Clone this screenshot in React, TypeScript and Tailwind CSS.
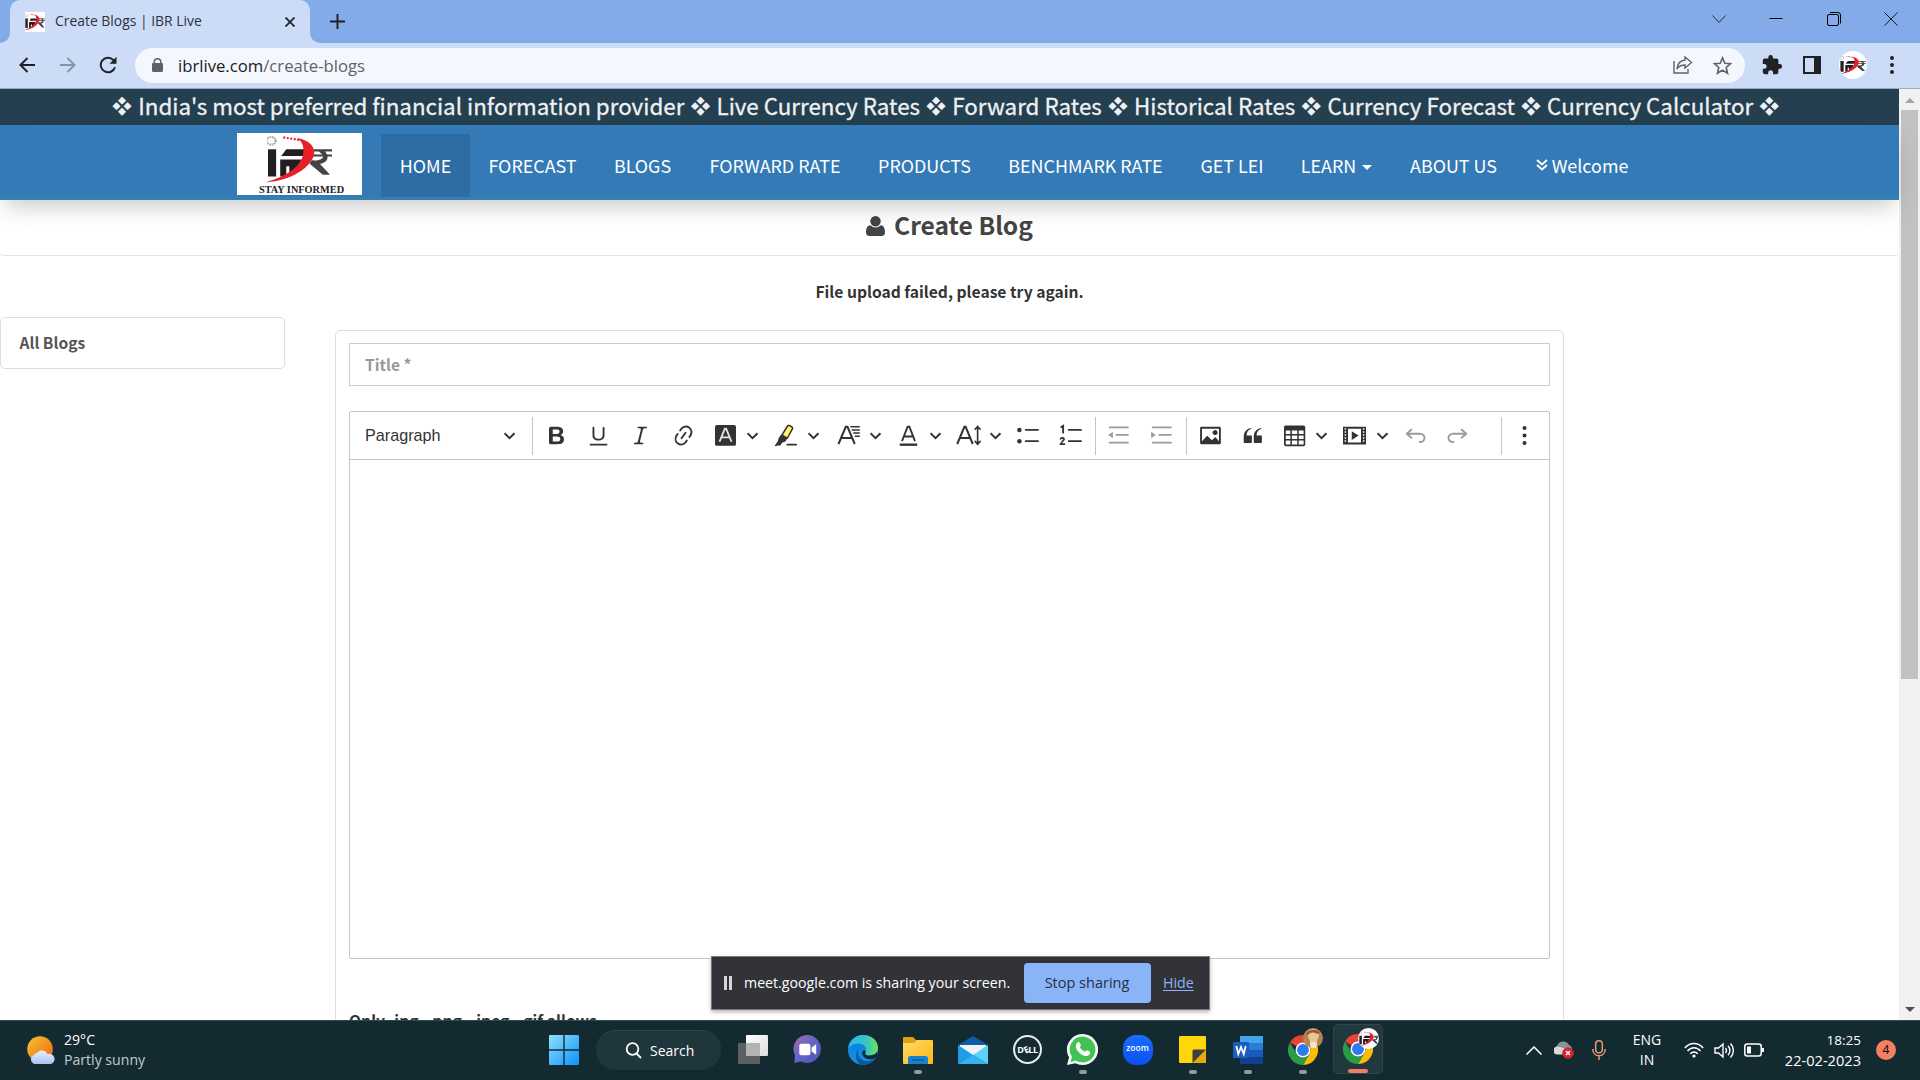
import React, { ReactNode } from "react";

const pageFont = "font-['Noto_Sans_CJK_SC','Noto_Sans',sans-serif]";
const uiFont = "font-['Open_Sans','Noto_Sans',sans-serif]";

function IbrMark({ className }: { className: string }) {
  return (
    <svg viewBox="0 0 64 60" preserveAspectRatio="none" className={className}>
      <g fill="#231f20">
        <path d="M1 18h8v32H1z" />
        <path d="M19 18h21l-1 8H14z" />
        <path d="M13 30h21c-3 8-7 13-12 17v-9h-3v12h-6z" />
      </g>
      <g fill="#444">
        <path d="M42 18h22v2.500H42zM42 24h22v2.500H42z" />
        <path d="M50 19h6c7 8 3 15-4 16l10 13h-7L42 35l2-4c8 1 12-2 11-6z" />
      </g>
      <path d="M30 5c15 3 20 15 14 26C38 43 20 56 -2 57c18-6 33-16 37-30 2-9 1-17-5-22z" fill="#e71f28" />
      <path d="M16 4l16 3" stroke="#e71f28" strokeWidth="2.500" strokeDasharray="2 1.500" />
      <circle cx="4" cy="8" r="4.500" fill="none" stroke="#aaa" strokeWidth="2.500" strokeDasharray="1.600 .8" />
    </svg>
  );
}

function TabStrip() {
  return (
    <div className="flex h-[43px] bg-[#84abe9]">
      <div className="relative ml-[10px] flex h-[43px] w-[300px] items-center rounded-t-[10px] bg-[#ccdcf7]">
        <svg viewBox="0 0 10 10" className="absolute -left-[10px] bottom-0 size-[10px] fill-[#ccdcf7]"><path d="M10 0v10H0A10 10 0 0 0 10 0z" /></svg>
        <svg viewBox="0 0 10 10" className="absolute -right-[10px] bottom-0 size-[10px] fill-[#ccdcf7]"><path d="M0 0v10h10A10 10 0 0 1 0 0z" /></svg>
        <div className="ml-[15px] flex size-5 items-center justify-center bg-white">
          <IbrMark className="h-[18px] w-5" />
        </div>
        <span className={`ml-[10px] w-[180px] text-[13.900px] whitespace-nowrap text-[#2b323d] ${uiFont}`}>Create Blogs | IBR Live</span>
        <svg viewBox="0 0 10 10" className="ml-[50px] size-[10px] stroke-[#1f2226] stroke-[1.8]"><path d="M.5.5l9 9M9.500.5l-9 9" /></svg>
      </div>
      <svg viewBox="0 0 15 15" className="mt-[14px] ml-5 size-[15px] stroke-[#1f2226] stroke-2"><path d="M7.500 0v15M0 7.500h15" /></svg>
      <div className="mt-3 ml-auto flex h-[13px] items-center pr-[22px]">
        <svg viewBox="0 0 14 14" fill="none" className="size-[14px] stroke-[#26334a] stroke-1"><path d="M.5 3.500l6.500 7 6.500-7" /></svg>
        <svg viewBox="0 0 14 14" fill="none" className="ml-[43px] size-[14px] stroke-black stroke-1"><path d="M.5 6.500h13" /></svg>
        <svg viewBox="0 0 14 14" fill="none" className="ml-[44px] size-[14px] stroke-black stroke-1"><rect x=".5" y="2.500" width="11" height="11" rx="1.500" /><path d="M3 .5h8a2.500 2.500 0 0 1 2.500 2.500v8.500" /></svg>
        <svg viewBox="0 0 14 14" fill="none" className="ml-[43px] size-[14px] stroke-[#111827] stroke-1"><path d="M.5.5l13 13M13.500.5l-13 13" /></svg>
      </div>
    </div>
  );
}

function AddressBar() {
  return (
    <div className="flex h-[46px] items-center border-b border-[#9aaac4] bg-[#ccdcf7] pb-px">
      <svg viewBox="0 0 16 16" fill="none" className="ml-[19px] size-4 stroke-[#202124] stroke-2"><path d="M16 8H1.500M8.500 1L1.500 8l7 7" /></svg>
      <svg viewBox="0 0 16 16" fill="none" className="ml-[25px] size-4 stroke-[#8592a8] stroke-2"><path d="M0 8h14.500M7.500 1l7 7-7 7" /></svg>
      <svg viewBox="0 0 18 18" fill="none" className="ml-[23px] size-[18px] stroke-[#202124] stroke-2"><path d="M16 11.200A7.300 7.300 0 1 1 14.300 3.900L16.500 6.200" /><path d="M17.500.8v7h-7z" fill="#202124" stroke="none" /></svg>
      <div className="ml-[18px] flex h-[35px] w-[1610px] items-center rounded-full bg-[#f4f7fd]">
        <svg viewBox="0 0 11 14" className="ml-[17px] h-[14px] w-[11px] fill-[#5f6368]"><path fillRule="evenodd" d="M1.500 5V4a4 4 0 0 1 8 0v1h.3c.7 0 1.200.5 1.200 1.200v6.600c0 .7-.5 1.200-1.200 1.200H1.200C.5 14 0 13.500 0 12.800V6.200C0 5.500.5 5 1.200 5zM3 5h5V4a2.500 2.500 0 0 0-5 0z" /></svg>
        <span className={`mt-px ml-[15px] text-[16.700px] whitespace-nowrap text-[#5f6368] ${uiFont}`}>
          <span className="text-[#202124]">ibrlive.com</span>/create-blogs
        </span>
        <svg viewBox="0 0 20 18" fill="none" className="ml-auto h-[18px] w-5 stroke-[#5f6368] stroke-[1.400]"><path d="M1 5v12h14v-4" /><path d="M12 1l6.500 5.500L12 12V9c-4 0-6 1-8 4 .5-5 3-8.500 8-9z" /></svg>
        <svg viewBox="0 0 20 20" fill="none" className="mr-[13px] ml-5 size-[19px] stroke-[#5f6368] stroke-[1.700]"><path d="M10 2l2.400 5.600 6.100.5-4.600 4 1.400 6L10 14.900 4.700 18.100l1.400-6-4.600-4 6.100-.5z" /></svg>
      </div>
      <svg viewBox="0 0 24 24" className="ml-[16px] size-[22px] fill-[#202124]"><path d="M20.500 11H19V7a2 2 0 0 0-2-2h-4V3.500a2.500 2.500 0 0 0-5 0V5H4a2 2 0 0 0-2 2v3.800h1.500a2.700 2.700 0 0 1 0 5.400H2V20a2 2 0 0 0 2 2h3.800v-1.500a2.700 2.700 0 0 1 5.400 0V22H17a2 2 0 0 0 2-2v-4h1.500a2.500 2.500 0 0 0 0-5z" /></svg>
      <div className="ml-[20px] h-[18px] w-[18px] border-2 border-r-[7px] border-[#202124]" />
      <div className="ml-[18px] flex size-7 items-center justify-center overflow-hidden rounded-full bg-white">
        <IbrMark className="h-[20px] w-[26px]" />
      </div>
      <div className="ml-[23px] flex flex-col gap-[3px]">
        <i className="size-1 rounded-full bg-[#202124]" />
        <i className="size-1 rounded-full bg-[#202124]" />
        <i className="size-1 rounded-full bg-[#202124]" />
      </div>
    </div>
  );
}

const tickerItems = ["India's most preferred financial information provider", "Live Currency Rates", "Forward Rates", "Historical Rates", "Currency Forecast", "Currency Calculator"];

function Ticker() {
  const diamond = <span className="w-[32.200px] text-center text-[18.500px] [-webkit-text-stroke:0.900px_#eef1f3]">❖</span>;
  return (
    <div className="flex h-9 items-center bg-[#243f50] pb-[3px] pl-[106px] text-[22.370px] leading-[33px] whitespace-nowrap text-[#eef1f3] [-webkit-text-stroke:0.300px_#eef1f3]">
      {tickerItems.map((t) => (
        <React.Fragment key={t}>
          {diamond}
          <span>{t}</span>
        </React.Fragment>
      ))}
      {diamond}
    </div>
  );
}

function SiteNav() {
  const item = "flex h-[63px] items-center justify-center pb-px";
  return (
    <nav className="relative z-10 flex h-[75px] items-start border-b-[3px] border-[#3580ae] bg-[#337ab7] pt-2 pl-[237px] text-[17.900px] whitespace-nowrap text-white shadow-[0_12px_22px_-5px_rgba(0,0,0,0.20)]">
      <div className="flex h-[62px] w-[125px] flex-col items-center bg-white">
        <IbrMark className="mt-px h-[51px] w-[65px]" />
        <span className="ml-1 font-['Liberation_Serif',serif] text-[10.300px] leading-[10px] font-bold text-[#222]">STAY INFORMED</span>
      </div>
      <div className="mt-px ml-[19px] flex">
        <a className={`${item} w-[89px] bg-[#2e6da4]`}>HOME</a>
        <a className={`${item} w-[125px]`}>FORECAST</a>
        <a className={`${item} w-[95px]`}>BLOGS</a>
        <a className={`${item} w-[170px]`}>FORWARD RATE</a>
        <a className={`${item} w-[129px]`}>PRODUCTS</a>
        <a className={`${item} w-[193px]`}>BENCHMARK RATE</a>
        <a className={`${item} w-[100px]`}>GET LEI</a>
        <a className={`${item} w-[109px]`}>LEARN<i className="mt-1 ml-[6px] border-x-5 border-t-5 border-x-transparent border-t-white" /></a>
        <a className={`${item} w-[125px]`}>ABOUT US</a>
        <a className={`${item} w-[132px]`}>
          <svg viewBox="0 0 12 12" fill="none" className="mr-1 size-3 stroke-white stroke-[1.900]"><path d="M1 1l5 4.500L11 1M1 6l5 4.500L11 6" /></svg>
          Welcome
        </a>
      </div>
    </nav>
  );
}

function Ico({ ml, children, dim }: { ml: string; children: ReactNode; dim?: boolean }) {
  return (
    <svg viewBox="0 0 20 20" className={`${ml} size-[25px] shrink-0 ${dim ? "fill-[#9a9a9a] text-[#9a9a9a]" : "fill-[#333] text-[#333]"}`}>
      {children}
    </svg>
  );
}

function Caret({ ml }: { ml: string }) {
  return (
    <svg viewBox="0 0 12 8" fill="none" className={`${ml} mt-[1px] h-2 w-3 shrink-0 stroke-[#333] stroke-2`}>
      <path d="M.5 1.200l5 5 5-5" />
    </svg>
  );
}

function Sep({ ml }: { ml: string }) {
  return <i className={`${ml} h-[38px] w-px shrink-0 bg-[#c4c4c4]`} />;
}

function Toolbar() {
  const line = { fill: "none", stroke: "currentColor", strokeLinecap: "round" as const };
  return (
    <div className="flex h-[48px] items-center border-b border-[#c4c4c4]">
      <span className="ml-[15px] w-[139px] font-['Liberation_Sans',sans-serif] text-[16.200px] text-[#333]">Paragraph</span>
      <Caret ml="ml-0" />
      <Sep ml="ml-[16px]" />
      <Ico ml="ml-[11px]"><path d="M10.187 17H5.773c-.637 0-1.092-.138-1.364-.415-.273-.277-.409-.718-.409-1.323V4.738c0-.617.14-1.062.419-1.332.279-.27.73-.406 1.354-.406h4.680c.69 0 1.288.041 1.793.124.506.083.96.242 1.360.478.341.197.644.447.906.75a3.262 3.262 0 0 1 .808 2.162c0 1.401-.722 2.426-2.167 3.075C15.050 10.175 16 11.315 16 13.010a3.756 3.756 0 0 1-2.296 3.504 6.100 6.100 0 0 1-1.517.377c-.571.073-1.238.11-2 .11zm-.217-6.217H7v4.087h3.069c1.977 0 2.965-.69 2.965-2.072 0-.707-.256-1.220-.768-1.537-.512-.319-1.277-.478-2.296-.478zM7 5.130v3.619h2.606c.729 0 1.292-.067 1.690-.2a1.600 1.600 0 0 0 .91-.765c.165-.267.247-.566.247-.897 0-.707-.26-1.176-.778-1.409-.519-.232-1.310-.348-2.375-.348H7z" /></Ico>
      <Ico ml="ml-[17px]"><path d="M3 18v-1.500h14V18zm2.200-8V3.600c0-.4.4-.6.8-.6.3 0 .7.2.7.6v6.200c0 2 1.300 2.800 3.200 2.800 1.900 0 3.400-.9 3.400-2.900V3.600c0-.3.4-.5.8-.5.3 0 .7.2.7.5V10c0 2.700-2.200 4-4.900 4-2.600 0-4.700-1.200-4.700-4z" /></Ico>
      <Ico ml="ml-[17px]"><path d="m9.586 14.633.021.004c-.036.335.095.655.393.962.082.083.173.15.274.201h1.474a.6.6 0 1 1 0 1.200H5.304a.6.6 0 0 1 0-1.200h1.150c.474-.07.809-.182 1.005-.334.157-.122.291-.32.404-.597l2.416-9.550a1.053 1.053 0 0 0-.281-.823 1.120 1.120 0 0 0-.442-.296H8.150a.6.6 0 0 1 0-1.200h6.443a.6.6 0 1 1 0 1.200h-1.195c-.376.056-.65.155-.823.296-.215.175-.423.439-.623.79l-2.366 9.347z" /></Ico>
      <Ico ml="ml-[18px]"><path d="m11.077 15 .991-1.416a.75.75 0 1 1 1.229.86l-1.148 1.640a.748.748 0 0 1-.217.206 5.251 5.251 0 0 1-8.503-5.955.741.741 0 0 1 .12-.274l1.147-1.639a.75.75 0 1 1 1.228.86L4.933 10.700l.006.003a3.750 3.750 0 0 0 6.132 4.294l.006.004zm5.494-5.335a.748.748 0 0 1-.12.274l-1.147 1.639a.75.75 0 1 1-1.228-.86l.86-1.230a3.750 3.750 0 0 0-6.144-4.301l-.86 1.229a.75.75 0 0 1-1.229-.86l1.148-1.640a.748.748 0 0 1 .217-.206 5.251 5.251 0 0 1 8.503 5.955zm-4.563-2.532a.75.75 0 0 1 .184 1.045l-3.155 4.505a.75.75 0 1 1-1.229-.86l3.155-4.506a.75.75 0 0 1 1.045-.184z" /></Ico>
      <Ico ml="ml-[17px]">
        <rect x="1.600" y="1.600" width="16.800" height="16.600" rx="1.500" />
        <path d="M5.200 15L9.500 4.500h1L14.800 15M6.700 11.500h6.600" fill="none" stroke="#e4e4e4" strokeWidth="1.500" />
      </Ico>
      <Caret ml="ml-[9px]" />
      <Ico ml="ml-[14px]">
        <path d="M11.300 2.800c.5-.9 1.200-1.100 2-.7l1.600.9c.8.500 1 1.200.5 2l-4 7.200-4.300-2.400z" fill="#fdf46d" stroke="#333" strokeWidth="1.200" />
        <path d="M6.600 9.200l5 2.900-1.900 2.800-2.200.6L5.800 18l-2.200-.1-1.300.6-1-.4 2.500-3.300.9-3.200z" />
        <path d="M11.500 17.300h7" {...line} strokeWidth="1.500" />
      </Ico>
      <Caret ml="ml-[10px]" />
      <Ico ml="ml-[16px]">
        <path d="M2 16.800L7.800 3h1.400L15 16.800M4 12h9" {...line} strokeLinecap="butt" strokeWidth="1.600" />
        <path d="M11.500 3h7.500M12.500 5.500H19M13.800 8H19M15 10.500h4" {...line} strokeLinecap="butt" strokeWidth="1.200" />
      </Ico>
      <Caret ml="ml-[9px]" />
      <Ico ml="ml-[14px]">
        <path d="M4.800 14.500L9.300 3h1.400l4.500 11.500M6.300 10.800h7.400" {...line} strokeLinecap="butt" strokeWidth="1.500" />
        <path d="M3 16.400h14v1.900H3z" />
      </Ico>
      <Caret ml="ml-[9px]" />
      <Ico ml="ml-[14px]">
        <path d="M1 16.800L6.700 3h1l5.700 13.800M3 12h8.400" {...line} strokeLinecap="butt" strokeWidth="1.600" />
        <path d="M17.300 4v12M15.300 5l2-2.300 2 2.300M15.300 14.700l2 2.300 2-2.300" {...line} strokeWidth="1.300" />
      </Ico>
      <Caret ml="ml-[9px]" />
      <Ico ml="ml-[14px]">
        <circle cx="2.700" cy="5.500" r="1.800" /><circle cx="2.700" cy="14.500" r="1.800" />
        <path d="M7.800 5.500h9.800M7.800 14.500h9.800" {...line} strokeWidth="1.500" />
      </Ico>
      <Ico ml="ml-[18px]">
        <path d="M1.800 3.200l1.500-.9v5.400" {...line} strokeWidth="1.500" />
        <path d="M1.200 12.700c.8-1.300 3-1 2.800.3-.2 1.200-2 2-2.600 3.800h3" {...line} strokeWidth="1.400" />
        <path d="M7.800 5.500h9.800M7.800 14.500h9.800" {...line} strokeWidth="1.500" />
      </Ico>
      <Sep ml="ml-[11px]" />
      <Ico ml="ml-[10px]" dim>
        <path d="M3 3.500h14.500M8.300 9.500h9.200M3 15.700h14.500" {...line} strokeWidth="1.500" />
        <path d="M5.500 7v5L1.700 9.500z" />
      </Ico>
      <Ico ml="ml-[18px]" dim>
        <path d="M3 3.500h14.500M8.300 9.500h9.200M3 15.700h14.500" {...line} strokeWidth="1.500" />
        <path d="M1.700 7v5l3.800-2.500z" />
      </Ico>
      <Sep ml="ml-[12px]" />
      <Ico ml="ml-[11px]"><path d="M6.910 10.540c.26-.23.64-.21.88.03l3.360 3.140 2.230-2.060a.64.64 0 0 1 .87 0l2.520 2.970V4.500H3.200v10.120l3.710-4.080zm10.270-7.510c.6 0 1.090.47 1.090 1.050v11.840c0 .59-.49 1.060-1.090 1.060H2.790c-.6 0-1.090-.47-1.090-1.060V4.080c0-.58.49-1.050 1.100-1.050h14.380zm-5.220 5.560a1.960 1.960 0 1 1 3.400-1.960 1.960 1.960 0 0 1-3.400 1.960z" /></Ico>
      <Ico ml="ml-[17px]"><path d="M3 10.423a6.500 6.500 0 0 1 6.056-6.408l.038.67C6.448 5.423 5.354 7.663 5.220 10H9c.552 0 .5.432.5.986v4.511c0 .554-.448.503-1 .503h-5c-.552 0-.5-.449-.5-1.003v-4.574zm8 0a6.500 6.500 0 0 1 6.056-6.408l.038.67c-2.646.739-3.740 2.979-3.873 5.315H17c.552 0 .5.432.5.986v4.511c0 .554-.448.503-1 .503h-5c-.552 0-.5-.449-.5-1.003v-4.574z" /></Ico>
      <Ico ml="ml-[17px]">
        <path fillRule="evenodd" d="M3 2h14.200c.9 0 1.400.6 1.400 1.500V17c0 .9-.5 1.500-1.400 1.500H3c-.9 0-1.400-.6-1.400-1.500V3.500C1.600 2.600 2.100 2 3 2zm0 4v2.800h3.700V6zm4.900 0v2.800h4.300V6zm5.500 0v2.800h3.900V6zM3 10v2.800h3.700V10zm4.900 0v2.800h4.300V10zm5.500 0v2.800h3.900V10zM3 14v3.100h3.700V14zm4.900 0v3.100h4.300V14zm5.500 0v3.100h3.900V14z" />
      </Ico>
      <Caret ml="ml-[9px]" />
      <Ico ml="ml-[14px]">
        <path fillRule="evenodd" d="M.8 2.900h18.400v14.200H.8zM4.800 4.500v11h10.400v-11z" />
        <path d="M7.800 6.500v7l5.500-3.500z" />
        <path d="M2.700 4.200v12M17.300 4.200v12" stroke="#fff" strokeWidth="1.200" strokeDasharray="1.200 1.200" />
      </Ico>
      <Caret ml="ml-[10px]" />
      <Ico ml="ml-[14px]" dim><path d="m5.042 9.367 2.189 1.837a.75.75 0 0 1-.965 1.149l-3.788-3.180a.747.747 0 0 1-.21-.284.75.75 0 0 1 .17-.945L6.230 4.762a.75.75 0 1 1 .964 1.150L4.863 7.866h8.917A.75.75 0 0 1 14 7.900a4 4 0 1 1-1.477 7.718l.344-1.489a2.500 2.500 0 1 0 1.094-4.730l.008-.032H5.042z" /></Ico>
      <Ico ml="ml-[17px]" dim><path transform="matrix(-1 0 0 1 20 0)" d="m5.042 9.367 2.189 1.837a.75.75 0 0 1-.965 1.149l-3.788-3.180a.747.747 0 0 1-.21-.284.75.75 0 0 1 .17-.945L6.230 4.762a.75.75 0 1 1 .964 1.150L4.863 7.866h8.917A.75.75 0 0 1 14 7.900a4 4 0 1 1-1.477 7.718l.344-1.489a2.500 2.500 0 1 0 1.094-4.730l.008-.032H5.042z" /></Ico>
      <Sep ml="ml-[31px]" />
      <Ico ml="ml-[10px]"><circle cx="10" cy="4" r="1.600" /><circle cx="10" cy="10" r="1.600" /><circle cx="10" cy="16" r="1.600" /></Ico>
    </div>
  );
}

function SharingBar() {
  return (
    <div className={`absolute top-[956px] left-[711px] z-20 flex h-[54px] w-[499px] items-center border border-[#77787b] bg-[#323338] text-[14.200px] whitespace-nowrap shadow-[0_2px_4px_rgba(0,0,0,0.3)] ${uiFont}`}>
      <i className="ml-3 h-[14px] w-[8px] border-x-3 border-[#d5d6d8]" />
      <span className="ml-[12px] w-[280px] text-white">meet.google.com is sharing your screen.</span>
      <button className="flex h-10 w-[127px] items-center justify-center rounded-[4px] bg-[#8ab4f8] pr-px text-[14.500px] text-[#26303f]">Stop sharing</button>
      <a className="ml-3 text-[#8ab4f8] underline underline-offset-2">Hide</a>
    </div>
  );
}

function ChromeIcon() {
  return (
    <svg viewBox="0 0 48 48" className="size-[30px]">
      <path d="M24 24L3.200 12A24 24 0 0 1 44.800 12z" fill="#ea4335" />
      <path d="M44.800 12A24 24 0 0 1 24 48l10.400-18A12 12 0 0 0 24 12z" fill="#fbbc04" />
      <path d="M3.200 12A24 24 0 0 0 24 48l10.400-18A12 12 0 0 1 13.600 30z" fill="#2a9c48" />
      <circle cx="24" cy="24" r="12" fill="#fff" /><circle cx="24" cy="24" r="9.500" fill="#2f7bee" />
    </svg>
  );
}

function TaskItem({ children, dot }: { children: ReactNode; dot?: boolean }) {
  return (
    <div className="relative flex h-[60px] w-[55px] shrink-0 items-center justify-center pb-px">
      {children}
      {dot && <i className="absolute bottom-[6px] left-[24px] h-1 w-2 rounded-full bg-[#8f9b9e]" />}
    </div>
  );
}

function Taskbar() {
  return (
    <div className={`flex h-[60px] items-center border-t border-[#33494f] bg-[#132a31] pb-px text-[14px] whitespace-nowrap text-white ${uiFont}`}>
      <svg viewBox="0 0 28 28" className="ml-[27px] h-[28px] w-[28px]">
        <defs><linearGradient id="sun" x2="1" y2="1"><stop stopColor="#f4c430" /><stop offset="1" stopColor="#f0650e" /></linearGradient><linearGradient id="cl" x2="0" y2="1"><stop stopColor="#e9f0fd" /><stop offset="1" stopColor="#a9c2f0" /></linearGradient></defs>
        <circle cx="13" cy="13" r="12.800" fill="url(#sun)" />
        <path d="M7 28a5 5 0 0 1-.5-9 7 7 0 0 1 4-2.500 6 6 0 0 1 10 1.500A5 5 0 0 1 24 28z" fill="url(#cl)" />
      </svg>
      <div className="ml-[9px] w-[120px] pb-px text-[14.100px] leading-5">
        <div>29°C</div>
        <div className="text-[#c3cbce]">Partly sunny</div>
      </div>
      <svg viewBox="0 0 30 30" className="ml-[365px] size-[30px]">
        <defs><linearGradient id="win" x2="1" y2="1"><stop stopColor="#8fe0fd" /><stop offset="1" stopColor="#0a92fb" /></linearGradient></defs>
        <path d="M1 0h13.300v14.300H0V1a1 1 0 0 1 1-1zM15.700 0H29a1 1 0 0 1 1 1v13.300H15.700zM0 15.700h14.300V30H1a1 1 0 0 1-1-1zM15.700 15.700H30V29a1 1 0 0 1-1 1H15.700z" fill="url(#win)" />
      </svg>
      <div className="ml-[17px] flex h-10 w-[125px] items-center rounded-full border-t border-[#2f454c] bg-[#20363d] pl-[29px]">
        <svg viewBox="0 0 17 17" fill="none" className="size-[17px] stroke-white stroke-[1.800]"><circle cx="7.500" cy="7" r="5.800" /><path d="M11.500 11.500l4.500 4.500" /></svg>
        <span className="ml-[8px]">Search</span>
      </div>
      <div className="ml-[4px] flex">
        <TaskItem>
          <svg viewBox="0 0 30 29" className="h-[29px] w-[30px]"><defs><linearGradient id="tv" x2="1" y2="1"><stop stopColor="#fff" /><stop offset="1" stopColor="#ddd" /></linearGradient></defs><rect x="8" width="22" height="21" rx="1" fill="url(#tv)" /><rect y="8" width="22" height="21" rx="1" fill="#666" opacity=".9" /><path d="M8 8h14v13H8z" fill="#b3b3b3" /></svg>
        </TaskItem>
        <TaskItem>
          <svg viewBox="0 0 30 30" className="size-[29px]"><defs><linearGradient id="mt" x2="1" y2="1"><stop stopColor="#a86bb0" /><stop offset=".5" stopColor="#6264c7" /><stop offset="1" stopColor="#4b53bc" /></linearGradient></defs><path d="M15.500 0A14.500 14.500 0 1 1 8 27.500L1.500 29 2 21A14.500 14.500 0 0 1 15.500 0z" fill="url(#mt)" /><rect x="6.500" y="9" width="11.500" height="12" rx="2" fill="#fff" /><path d="M19.300 13l4.700-3.500v11L19.300 17z" fill="#fff" /></svg>
        </TaskItem>
        <TaskItem>
          <svg viewBox="0 0 30 30" className="size-[30px]">
            <defs><linearGradient id="e1"><stop stopColor="#2cb4ee" /><stop offset=".6" stopColor="#35c5c6" /><stop offset="1" stopColor="#6fe354" /></linearGradient><linearGradient id="e2" x2="0" y2="1"><stop stopColor="#0c7ddb" /><stop offset="1" stopColor="#1390e6" /></linearGradient></defs>
            <circle cx="15" cy="15" r="15" fill="url(#e2)" />
            <path d="M0 14C1 5 8 0 15 0c9 0 15 6 15 12.500 0 5-3.500 8-8.500 8-4 0-5-1.500-4-3 2-3 0-7.500-5-8.500C7 8 2 10 0 14z" fill="url(#e1)" />
            <path d="M12 13c-3 2-3 8 1 11 5 4 12 2 15-2-2 5-8 8-13 8-8-1-9-13-3-17z" fill="#0b57a4" />
            <path d="M17.500 17.500c-1 1.500 0 3 4 3 3.500 0 6-1.200 7.500-3.500l1 4-1.700 1.500c-6 4-15 1-14-5.500.5-2 3.700-2 3.200.5z" fill="#132a31" />
          </svg>
        </TaskItem>
        <TaskItem dot>
          <svg viewBox="0 0 30 28" className="h-[28px] w-[30px]"><defs><linearGradient id="fe" x2="1" y2="1"><stop stopColor="#ffd969" /><stop offset="1" stopColor="#fdb714" /></linearGradient></defs><path d="M0 2a1 1 0 0 1 1-1h9l3 3h16v8H0z" fill="#e2a00e" /><path d="M0 7h11l3-3h15a1 1 0 0 1 1 1v22a1 1 0 0 1-1 1H1a1 1 0 0 1-1-1z" fill="url(#fe)" /><path d="M5 28v-5.500A2.500 2.500 0 0 1 7.500 20h15a2.500 2.500 0 0 1 2.500 2.500V28z" fill="#1583cf" /><path d="M9 24h12" stroke="#0c5a99" strokeWidth="1.400" /></svg>
        </TaskItem>
        <TaskItem>
          <svg viewBox="0 0 30 28" className="h-[28px] w-[30px]"><path d="M0 9L15 0l15 9v6H0z" fill="#0c5ea8" /><path d="M2 9h26v10H2z" fill="#f2f2f2" /><path d="M0 9l15 10L0 28z" fill="#1f9ce8" /><path d="M30 9L15 19l15 9z" fill="#5fd0f8" /><path d="M0 28l15-9.500L30 28z" fill="#32b3ef" /></svg>
        </TaskItem>
        <TaskItem>
          <div className="flex size-[29px] items-center justify-center rounded-full border-2 border-[#e8ebec]"><span className="text-[9px] font-bold tracking-[-0.400px]">D<span className="inline-block -rotate-[25deg]">E</span>LL</span></div>
        </TaskItem>
        <TaskItem dot>
          <svg viewBox="0 0 30 30" className="size-[31px]"><path d="M15 0a15 15 0 1 1-7 28.200L0 30l2-7.500A15 15 0 0 1 15 0z" fill="#f3f7f3" /><path d="M15 2.500a12.500 12.500 0 1 1-6.500 23.200L3.500 27l1.300-5A12.500 12.500 0 0 1 15 2.500z" fill="#43c254" /><path d="M10.500 8c.8-.6 1.600-.3 2 .6l.9 2.100c.3.7-.9 1.600-1 2 .9 2 2.700 3.600 4.900 4.500.6 0 1.400-1.700 2-1.400l2.500 1.200c.8.4.6 1.400.2 2.300-1 1.900-3.400 2.300-5.300 1.700-4-1.200-6.800-4-8-7.600-.5-2 .2-4.200 1.800-5.400z" fill="#fff" /></svg>
        </TaskItem>
        <TaskItem>
          <div className="flex size-[30px] items-center justify-center rounded-[13px] bg-gradient-to-b from-[#1a6dff] to-[#0b4ff2] pb-[3px] text-[8.500px] font-semibold">zoom</div>
        </TaskItem>
        <TaskItem dot>
          <svg viewBox="0 0 27 27" className="size-[27px]"><path d="M1 0h25a1 1 0 0 1 1 1v26H1a1 1 0 0 1-1-1V1a1 1 0 0 1 1-1z" fill="#ffd60a" /><path d="M13.500 27L27 13.500V27z" fill="#e8a80c" /><path d="M13.500 27V15a1.500 1.500 0 0 1 1.500-1.500h12z" fill="#3f3f3f" /></svg>
        </TaskItem>
        <TaskItem dot>
          <svg viewBox="0 0 30 28" className="h-[28px] w-[30px]"><path d="M7 0h23v7H7z" fill="#41a5ee" /><path d="M7 7h23v7H7z" fill="#2b7cd3" /><path d="M7 14h23v7H7z" fill="#185abd" /><path d="M7 21h23v7H7z" fill="#103f91" /><rect y="6" width="16" height="16" rx="1" fill="#1b5cbe" /><path d="M3.300 10l2 8L8 11l2.700 7 2-8" fill="none" stroke="#fff" strokeWidth="1.800" /></svg>
        </TaskItem>
        <TaskItem dot>
          <ChromeIcon />
          <svg viewBox="0 0 20 20" className="absolute top-[8px] left-[28px] size-5"><circle cx="10" cy="10" r="10" fill="#b5854f" /><path d="M10 1a6 6 0 0 1 6 6c0 3-2 4-2 6v6H7v-6C4 9 4 1 10 1z" fill="#e6c894" /><path d="M3 6c3-5 10-6 14-1l-3 1c-3-2-6-2-9 1z" fill="#a5523a" /><path d="M7 14h7l-1 6H8z" fill="#efe4d0" /></svg>
        </TaskItem>
        <div className="relative mt-1 ml-[3px] flex h-[50px] w-[50px] items-center justify-center rounded-[5px] border border-[#30464d] bg-[#22383f]">
          <ChromeIcon />
          <div className="absolute top-[3px] left-[24px] flex size-[21px] items-center justify-center overflow-hidden rounded-full bg-white"><IbrMark className="h-[16px] w-5" /></div>
          <i className="absolute bottom-0 left-[14px] h-1 w-5 rounded-full bg-[#f47f64]" />
        </div>
      </div>
      <svg viewBox="0 0 16 9" fill="none" className="ml-[143px] h-[9px] w-4 stroke-white stroke-[1.500]"><path d="M.5 8.500L8 1l7.500 7.500" /></svg>
      <svg viewBox="0 0 20 18" className="ml-[12px] h-[18px] w-5"><path d="M3 12a4 4 0 0 1 0-7 6.500 6.500 0 0 1 12-1c3 1 4 4 2 8z" fill="#8b9294" /><path d="M3 13.500a4 4 0 0 1 1-8l7 2 4 6z" fill="#d7dadb" /><circle cx="14" cy="12" r="5.800" fill="#d8232f" /><path d="M12 10l4 4M16 10l-4 4" stroke="#fff" strokeWidth="1.400" /></svg>
      <svg viewBox="0 0 14 20" fill="none" className="ml-[18px] h-5 w-[14px] stroke-[#e39a77] stroke-[1.500]"><rect x="3.700" y=".8" width="6.600" height="12" rx="3.300" /><path d="M.8 9c0 9 12.400 9 12.400 0M7 16v4" /></svg>
      <div className="ml-[24px] w-[34px] text-center leading-5"><div>ENG</div><div>IN</div></div>
      <svg viewBox="0 0 20 16" fill="none" className="ml-[20px] h-4 w-5 stroke-white stroke-[1.500]"><path d="M.8 6c5-6 13.400-6 18.400 0M3.500 9c3.600-4.500 9.400-4.500 13 0M6.300 11.800c2-2.500 5.400-2.500 7.400 0" /><circle cx="10" cy="14" r="1.600" fill="#fff" stroke="none" /></svg>
      <svg viewBox="0 0 20 17" fill="none" className="ml-[10px] h-[17px] w-5 stroke-white stroke-[1.400]"><path d="M1 6v5h3.500L9 15V2L4.500 6zM11.500 6c1.200 1.500 1.200 3.500 0 5M14 3.800c2.500 2.700 2.500 6.700 0 9.400M16.500 1.500c3.800 4 3.800 10 0 14" /></svg>
      <svg viewBox="0 0 20 14" fill="none" className="ml-[10px] h-[14px] w-5 stroke-white stroke-[1.500]"><rect x=".8" y="1" width="16.400" height="12" rx="2.500" /><path d="M3 3.500h4v7H3z" fill="#fff" stroke="none" /><path d="M19 5v4" strokeWidth="2" /></svg>
      <div className="ml-[16px] w-[81px] pb-px text-right leading-5"><div className="text-[13.500px]">18:25</div><div className="text-[14.600px]">22-02-2023</div></div>
      <div className="ml-[15px] flex size-5 items-center justify-center rounded-full bg-[#f47f64] text-[12px] text-black">4</div>
    </div>
  );
}

function Scrollbar() {
  return (
    <div className="flex w-[21px] shrink-0 flex-col items-center bg-[#f1f1f1]">
      <i className="mt-[9px] border-x-5 border-b-5 border-x-transparent border-b-[#a3a3a3]" />
      <i className="mt-[7px] h-[569px] w-[17px] bg-[#c1c1c1]" />
      <i className="mt-auto mb-[8px] border-x-5 border-t-5 border-x-transparent border-t-[#505050]" />
    </div>
  );
}

export default function App() {
  return (
    <div className="relative flex h-[1080px] w-[1920px] flex-col overflow-hidden bg-white">
      <TabStrip />
      <AddressBar />
      <div className="flex h-[931px] overflow-hidden">
        <div className={`flex w-[1899px] flex-col ${pageFont}`}>
          <Ticker />
          <SiteNav />
          <div className="flex h-14 shrink-0 items-center justify-center rounded-b-[4px] border-b border-[#e2e2e2] pb-[6px] text-[24.600px] leading-none font-bold text-[#444]">
            <svg viewBox="0 0 19 20" className="mt-[3px] mr-[9px] h-5 w-[19px] fill-[#444]"><circle cx="9.500" cy="5.200" r="5.200" /><path d="M4.400 9.300a7 7 0 0 0 10.200 0c3 .2 4.400 3 4.400 7.200 0 2.200-1.400 3.500-3.400 3.500H3.400C1.400 20 0 18.700 0 16.500c0-4.200 1.400-7 4.400-7.200z" /></svg>
            Create Blog
          </div>
          <div className="mt-6 h-6 shrink-0 text-center text-[15.650px] leading-6 font-bold text-[#333]">File upload failed, please try again.</div>
          <div className="mt-[13px] flex flex-1 items-start">
            <div className="flex h-[52px] w-[285px] shrink-0 items-center rounded-[5px] border border-[#ddd] pl-[18.500px] text-[15.600px] font-bold text-[#555]">All Blogs</div>
            <div className="mt-[13px] ml-[50px] h-[720px] w-[1229px] rounded-[5px] border border-[#ddd] px-[13px] pt-3">
              <div className="flex h-[43px] items-center border border-[#ccccd9] pl-[15px] text-[15.600px] font-bold text-[#999]">Title *</div>
              <div className="mt-[25px] h-[548px] rounded-[2px] border border-[#c4c4c4]">
                <Toolbar />
              </div>
              <div className="mt-[50px] text-[15.700px] leading-6 font-bold text-[#333]">Only .jpg, .png, .jpeg, .gif allows</div>
            </div>
          </div>
        </div>
        <Scrollbar />
      </div>
      <Taskbar />
      <SharingBar />
    </div>
  );
}
